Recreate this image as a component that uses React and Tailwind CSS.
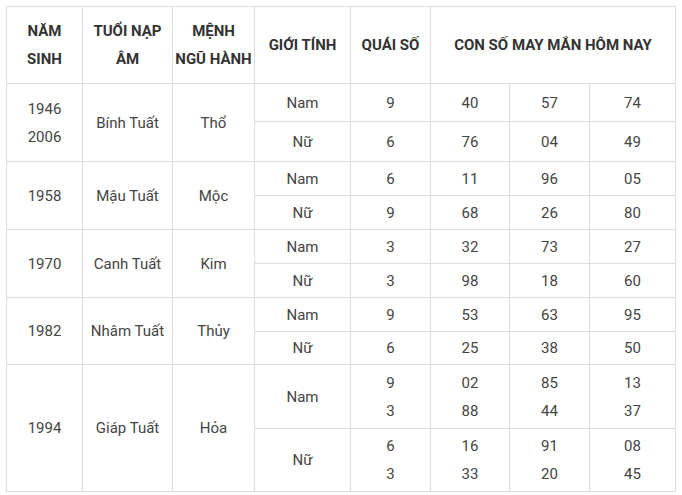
const rows = [
  { year: ['1946', '2006'], napAm: 'Bính Tuất', menh: 'Thổ', h: ['h-[38px]', 'h-[40px]'],
    sub: [
      { g: 'Nam', q: ['9'], n: [['40', '57', '74']] },
      { g: 'Nữ', q: ['6'], n: [['76', '04', '49']] },
    ] },
  { year: ['1958'], napAm: 'Mậu Tuất', menh: 'Mộc', h: ['h-[34px]', 'h-[34px]'],
    sub: [
      { g: 'Nam', q: ['6'], n: [['11', '96', '05']] },
      { g: 'Nữ', q: ['9'], n: [['68', '26', '80']] },
    ] },
  { year: ['1970'], napAm: 'Canh Tuất', menh: 'Kim', h: ['h-[34px]', 'h-[34px]'],
    sub: [
      { g: 'Nam', q: ['3'], n: [['32', '73', '27']] },
      { g: 'Nữ', q: ['3'], n: [['98', '18', '60']] },
    ] },
  { year: ['1982'], napAm: 'Nhâm Tuất', menh: 'Thủy', h: ['h-[34px]', 'h-[33px]'],
    sub: [
      { g: 'Nam', q: ['9'], n: [['53', '63', '95']] },
      { g: 'Nữ', q: ['6'], n: [['25', '38', '50']] },
    ] },
  { year: ['1994'], napAm: 'Giáp Tuất', menh: 'Hỏa', h: ['h-[64px]', 'h-[63px]'],
    sub: [
      { g: 'Nam', q: ['9', '3'], n: [['02', '85', '13'], ['88', '44', '37']] },
      { g: 'Nữ', q: ['6', '3'], n: [['16', '91', '08'], ['33', '20', '45']] },
    ] },
];

const Lines = ({ items }) => (
  <>
    {items.map((t, i) => (
      <div key={i}>{t}</div>
    ))}
  </>
);

const td = 'border border-[#dddddd] text-center align-middle p-0';

export default function App() {
  return (
    <div className="bg-white pt-[6px] pl-[6px] h-[495px] w-[682px]" style={{ fontFamily: 'Roboto, "Noto Sans", sans-serif' }}>
      <table className="table-fixed border-collapse w-[669px] text-[15px] leading-[28px] text-[#444444]">
        <colgroup>
          <col className="w-[76px]" />
          <col className="w-[90px]" />
          <col className="w-[82px]" />
          <col className="w-[96px]" />
          <col className="w-[80px]" />
          <col className="w-[79px]" />
          <col className="w-[80px]" />
          <col className="w-[86px]" />
        </colgroup>
        <thead>
          <tr className="h-[77px] font-bold text-[#333333]">
            <th className={td}>NĂM<br />SINH</th>
            <th className={td}>TUỔI NẠP<br />ÂM</th>
            <th className={td}>MỆNH<br />NGŨ HÀNH</th>
            <th className={td}>GIỚI TÍNH</th>
            <th className={td}>QUÁI SỐ</th>
            <th className={td} colSpan={3}>CON SỐ MAY MẮN HÔM NAY</th>
          </tr>
        </thead>
        <tbody>
          {rows.map((r) =>
            r.sub.map((s, i) => (
              <tr key={r.year[0] + s.g} className={r.h[i]}>
                {i === 0 && (
                  <>
                    <td className={td} rowSpan={2}><Lines items={r.year} /></td>
                    <td className={td} rowSpan={2}>{r.napAm}</td>
                    <td className={td} rowSpan={2}>{r.menh}</td>
                  </>
                )}
                <td className={td}>{s.g}</td>
                <td className={td}><Lines items={s.q} /></td>
                {[0, 1, 2].map((c) => (
                  <td key={c} className={td}>
                    <Lines items={s.n.map((line) => line[c])} />
                  </td>
                ))}
              </tr>
            ))
          )}
        </tbody>
      </table>
    </div>
  );
}
